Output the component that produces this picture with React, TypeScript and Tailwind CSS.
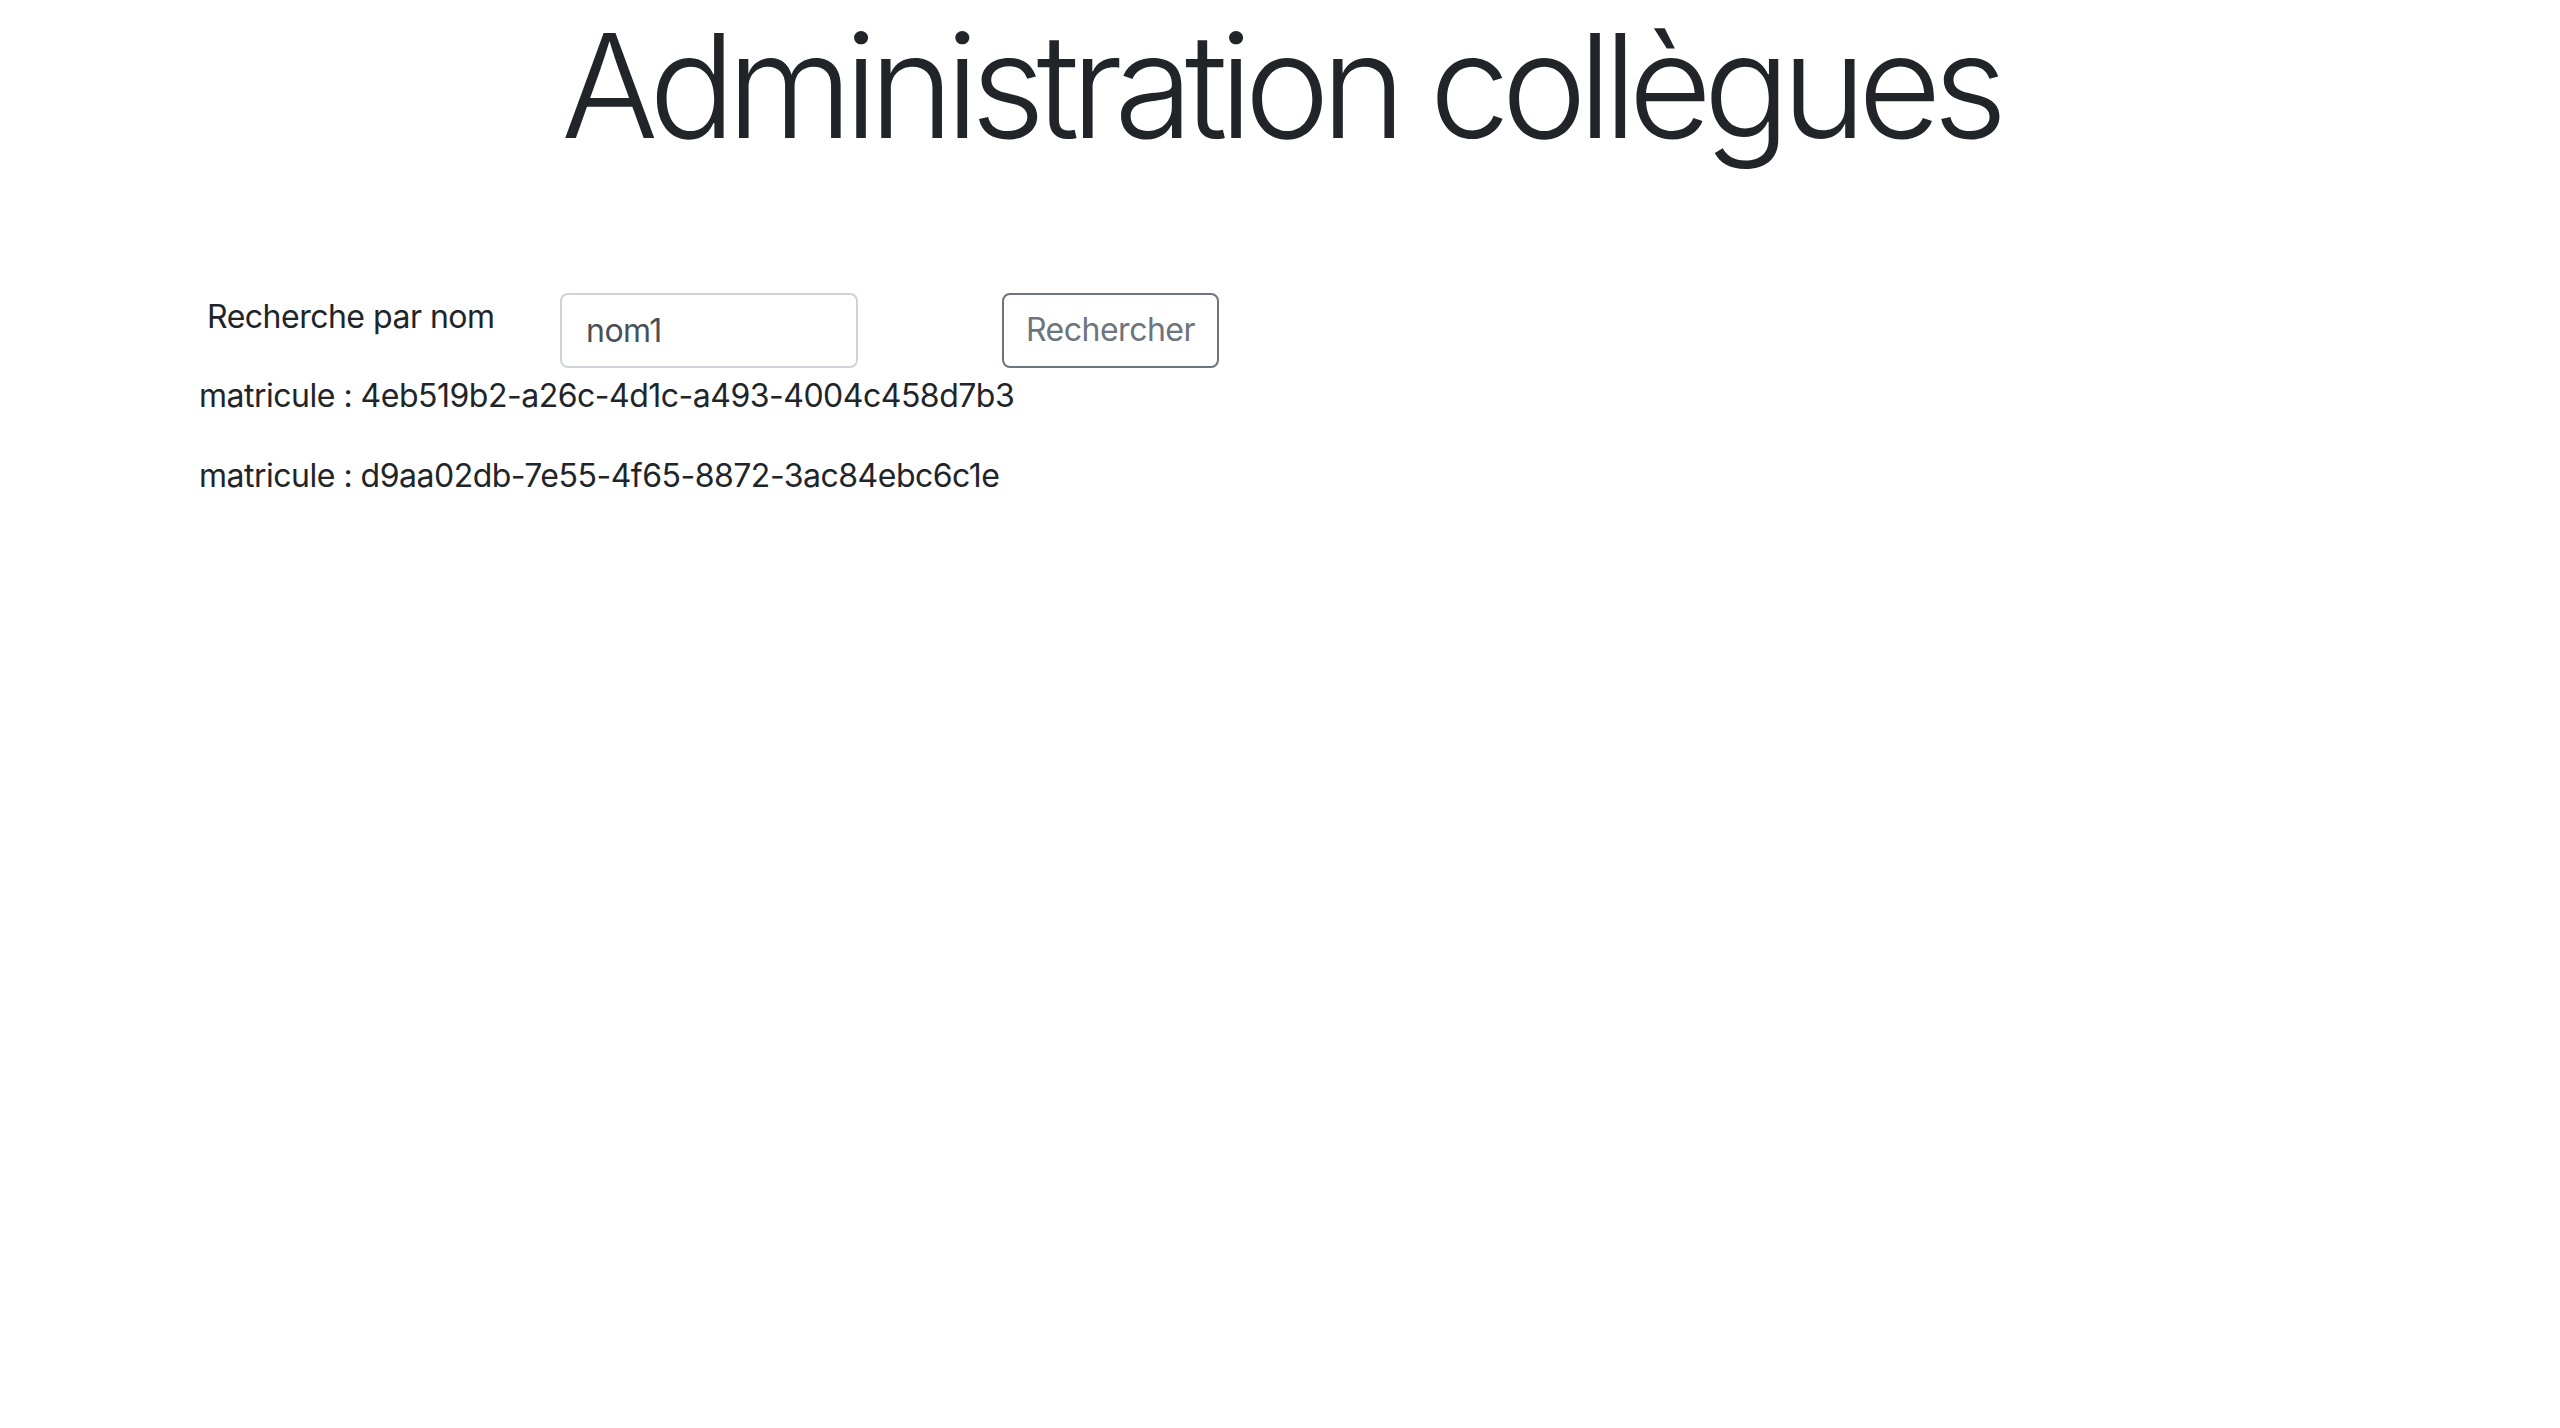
import React, { useState } from 'react';

const matricules = [
  '4eb519b2-a26c-4d1c-a493-4004c458d7b3',
  'd9aa02db-7e55-4f65-8872-3ac84ebc6c1e',
];

export default function App() {
  const [nom, setNom] = useState('nom1');

  return (
    <div className="min-h-screen bg-white text-[#212529] font-['Inter','Liberation_Sans',sans-serif] tracking-[-0.5px]">
      {/* Title */}
      <h1 className="m-0 text-center text-[144px] font-light leading-[1.2] tracking-[-8.5px]">
        Administration collègues
      </h1>

      {/* Search row */}
      <div className="mt-[120px] flex items-start pl-[207px]">
        <label className="w-[353px] text-[32px] leading-[48px]">Recherche par nom</label>
        <input
          value={nom}
          onChange={(e) => setNom(e.target.value)}
          className="h-[75px] w-[298px] rounded-[8px] border-2 border-[#ced4da] px-[24px] text-[32px] text-[#495057] outline-none"
        />
        <button className="ml-[144px] h-[75px] w-[217px] rounded-[8px] border-2 border-[#6c757d] text-[32px] text-[#6c757d]">
          Rechercher
        </button>
      </div>

      {/* Results */}
      <div className="mt-[4px] pl-[199px]">
        {matricules.map((m) => (
          <p key={m} className="mb-[32px] text-[32px] leading-[48px]">
            matricule : {m}
          </p>
        ))}
      </div>
    </div>
  );
}
